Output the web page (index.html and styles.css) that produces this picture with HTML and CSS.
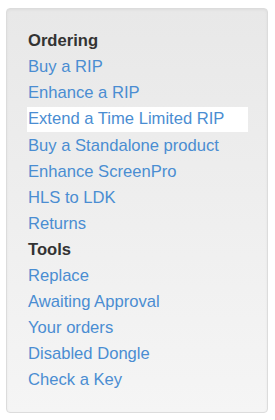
FILE: index.html
```html
<!DOCTYPE html>
<html lang="en">
<head>
    <meta charset="UTF-8">
    <meta name="viewport" content="width=device-width, initial-scale=1.0">
    <title>Menu</title>
    <link rel="stylesheet" href="styles.css">
</head>
<body>
    <div class="well">
        <ul class="nav-list">
            <li class="nav-header">Ordering</li>
            <li><a href="#">Buy a RIP</a></li>
            <li><a href="#">Enhance a RIP</a></li>
            <li class="active"><a href="#">Extend a Time Limited RIP</a></li>
            <li><a href="#">Buy a Standalone product</a></li>
            <li><a href="#">Enhance ScreenPro</a></li>
            <li><a href="#">HLS to LDK</a></li>
            <li><a href="#">Returns</a></li>
            <li class="nav-header">Tools</li>
            <li><a href="#">Replace</a></li>
            <li><a href="#">Awaiting Approval</a></li>
            <li><a href="#">Your orders</a></li>
            <li><a href="#">Disabled Dongle</a></li>
            <li><a href="#">Check a Key</a></li>
        </ul>
    </div>
</body>
</html>
```

FILE: styles.css
```css
body {
    margin: 0;
    padding: 8px 7px 0 6px;
    font-family: "Liberation Sans", Arial, sans-serif;
    font-size: 16.6px;
    color: #333;
    background: #fff;
}
.well {
    padding: 19px 20px 19px 20px;
    border: 1px solid #dcdcdc;
    border-radius: 4px;
    background-image: linear-gradient(to bottom, #e8e8e8 0, #f5f5f5 100%);
    box-shadow: inset 0 1px 3px rgba(0, 0, 0, 0.05), 0 1px 0 rgba(255, 255, 255, 0.1);
}
.nav-list {
    list-style: none;
    margin: 0;
    padding: 0;
}
.nav-list li {
    height: 26px;
    line-height: 26px;
}
.nav-header {
    font-weight: bold;
    padding-left: 1px;
}
.nav-list a {
    display: block;
    width: 220px;
    padding-left: 1px;
    color: #4a8dd2;
    text-decoration: none;
}
.nav-list .active a {
    background: #fff;
    margin-top: 1px;
    height: 25px;
    line-height: 24px;
}
```
